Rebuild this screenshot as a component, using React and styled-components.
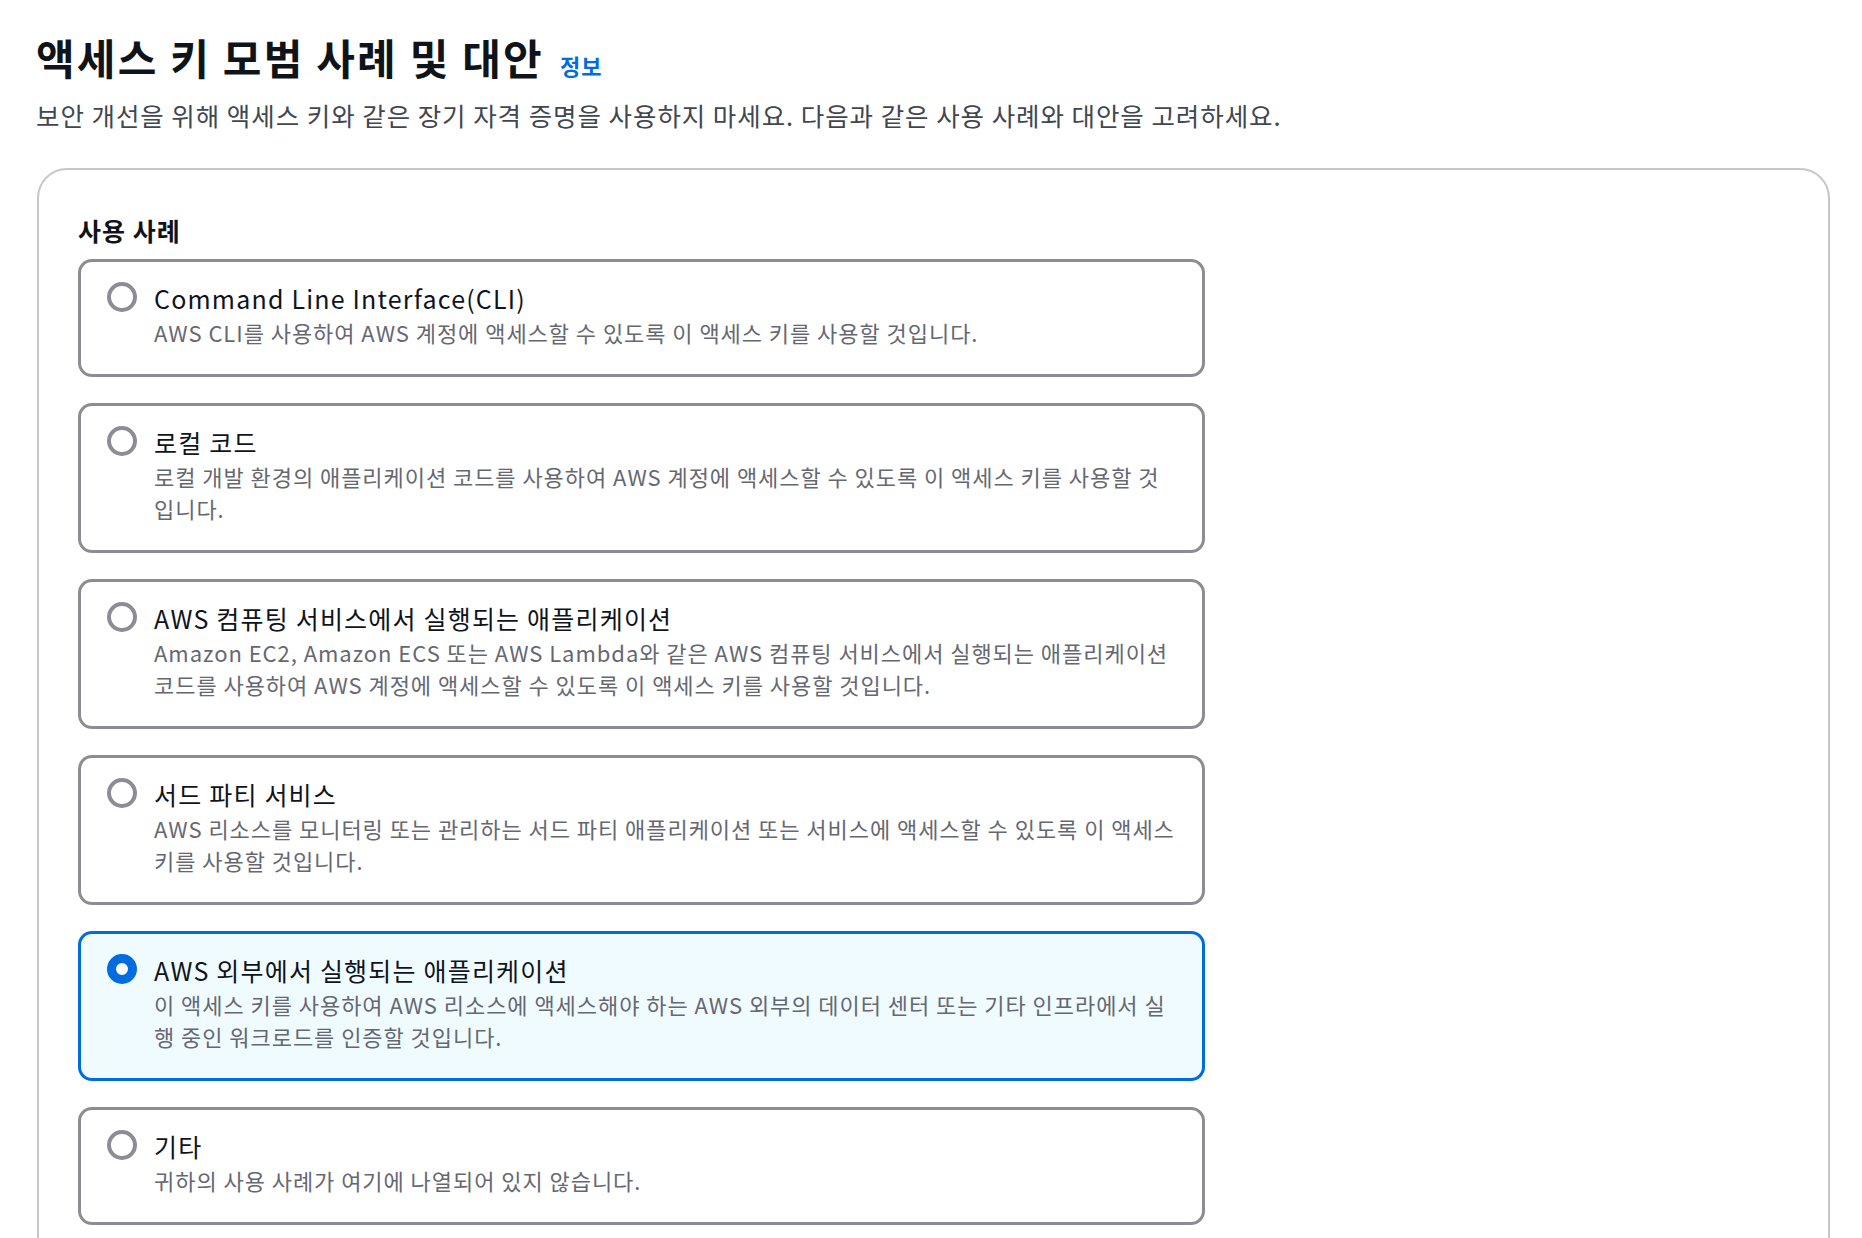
import React from 'react';
import styled, { createGlobalStyle } from 'styled-components';

const GlobalStyle = createGlobalStyle`
    body {
        margin: 0;
        background: #ffffff;
        font-family: "Noto Sans CJK KR", "Noto Sans", sans-serif;
        color: #0f141a;
    }
`

const useCases = [
    {
        title: 'Command Line Interface(CLI)',
        desc: 'AWS CLI를 사용하여 AWS 계정에 액세스할 수 있도록 이 액세스 키를 사용할 것입니다.',
    },
    {
        title: '로컬 코드',
        desc: '로컬 개발 환경의 애플리케이션 코드를 사용하여 AWS 계정에 액세스할 수 있도록 이 액세스 키를 사용할 것입니다.',
    },
    {
        title: 'AWS 컴퓨팅 서비스에서 실행되는 애플리케이션',
        desc: 'Amazon EC2, Amazon ECS 또는 AWS Lambda와 같은 AWS 컴퓨팅 서비스에서 실행되는 애플리케이션 코드를 사용하여 AWS 계정에 액세스할 수 있도록 이 액세스 키를 사용할 것입니다.',
    },
    {
        title: '서드 파티 서비스',
        desc: 'AWS 리소스를 모니터링 또는 관리하는 서드 파티 애플리케이션 또는 서비스에 액세스할 수 있도록 이 액세스 키를 사용할 것입니다.',
    },
    {
        title: 'AWS 외부에서 실행되는 애플리케이션',
        desc: '이 액세스 키를 사용하여 AWS 리소스에 액세스해야 하는 AWS 외부의 데이터 센터 또는 기타 인프라에서 실행 중인 워크로드를 인증할 것입니다.',
    },
    {
        title: '기타',
        desc: '귀하의 사용 사례가 여기에 나열되어 있지 않습니다.',
    },
]

const App = () => {
    const selected = 4;
    return (
        <Page>
            <GlobalStyle />
            <Header>
                <Title>액세스 키 모범 사례 및 대안</Title>
                <InfoLink href='#'>정보</InfoLink>
            </Header>
            <Subtitle>보안 개선을 위해 액세스 키와 같은 장기 자격 증명을 사용하지 마세요. 다음과 같은 사용 사례와 대안을 고려하세요.</Subtitle>
            <Container>
                <SectionLabel>사용 사례</SectionLabel>
                <Tiles>
                    {useCases.map((item, i) => (
                        <Tile key={item.title} $checked={i === selected}>
                            <Radio $checked={i === selected} />
                            <TileText>
                                <TileTitle>{item.title}</TileTitle>
                                <TileDesc>{item.desc}</TileDesc>
                            </TileText>
                        </Tile>
                    ))}
                </Tiles>
            </Container>
        </Page>
    );
}

export default App;

const Page = styled.div`
    padding: 32px 32px 0 36px;
    height: 1238px;
    box-sizing: border-box;
    overflow: hidden;
`

const Header = styled.div`
    display: flex;
    align-items: baseline;
    gap: 16px;
`

const Title = styled.h1`
    margin: 0;
    font-size: 42px;
    line-height: 50px;
    font-weight: 700;
    letter-spacing: 2.2px;
    color: #0f141a;
`

const InfoLink = styled.a`
    font-size: 22px;
    font-weight: 700;
    letter-spacing: 1px;
    color: #006ce0;
    text-decoration: none;
`

const Subtitle = styled.p`
    margin: 16px 0 0;
    font-size: 25.5px;
    line-height: 34px;
    letter-spacing: 0.95px;
    color: #414750;
`

const Container = styled.div`
    margin: 36px 0 0 1px;
    border: 2px solid #c6c6cd;
    border-radius: 30px;
    padding: 44px 39px 40px;
`

const SectionLabel = styled.h2`
    margin: 0;
    font-size: 25px;
    line-height: 32px;
    font-weight: 700;
    letter-spacing: 1px;
    color: #0f141a;
`

const Tiles = styled.div`
    display: flex;
    flex-direction: column;
    gap: 26px;
    margin-top: 13px;
    width: 1127px;
`

const Tile = styled.div`
    display: flex;
    gap: 17px;
    padding: 18px 26px 26px 26px;
    border: 3px solid ${p => p.$checked ? '#006ce0' : '#8c8c94'};
    border-radius: 14px;
    background: ${p => p.$checked ? '#f0fbff' : '#ffffff'};
`

const Radio = styled.span`
    flex: none;
    width: 30px;
    height: 30px;
    margin-top: 2px;
    box-sizing: border-box;
    border-radius: 50%;
    border: ${p => p.$checked ? '9px solid #006ce0' : '4px solid #8c8c94'};
    background: #ffffff;
`

const TileText = styled.div`
    display: flex;
    flex-direction: column;
    min-width: 0;
`

const TileTitle = styled.div`
    font-size: 25px;
    line-height: 36px;
    letter-spacing: 1.2px;
    color: #0f141a;
`

const TileDesc = styled.div`
    font-size: 22px;
    line-height: 32px;
    letter-spacing: 0.95px;
    color: #656871;
`
